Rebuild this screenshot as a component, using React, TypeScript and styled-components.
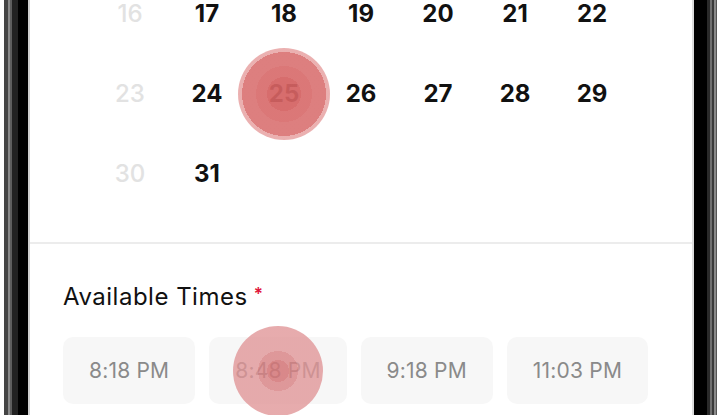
import styled, { createGlobalStyle } from "styled-components"

const GlobalStyle = createGlobalStyle`
  html, body {
    margin: 0;
    padding: 0;
    background: #ffffff;
    overflow: hidden;
  }
  body {
    font-family: Inter, "Noto Sans", "Liberation Sans", sans-serif;
    color: #111111;
  }
`

const Device = styled.div`
  display: flex;
  height: 415px;
  padding: 0 5px 0 4px;
  box-sizing: border-box;
`

const Bezel = styled.div<{ $side: "left" | "right" }>`
  width: ${p => (p.$side === "left" ? "26px" : "25px")};
  flex-shrink: 0;
  background: ${p =>
    p.$side === "left"
      ? `linear-gradient(90deg, #444 0 4px, #8a8a8a 4px 6px, #5e5e5e 6px 8px, #222 8px 14px, #000 14px 24px, #cfcfcf 24px 26px)`
      : `linear-gradient(90deg, #dcdcdc 0 2px, #000 2px 15px, #2a2a2a 15px 18px, #707070 18px 20px, #3a3a3a 20px 22px, #8a8a8a 22px 24px, #555 24px 25px)`};
`

const Screen = styled.div`
  flex: 1;
  position: relative;
  overflow: hidden;
  background: #ffffff;
`

const Calendar = styled.div`
  display: grid;
  grid-template-columns: repeat(7, 77px);
  grid-auto-rows: 80px;
  justify-content: center;
  margin-top: -26px;
`

const Day = styled.div<{ $muted?: boolean }>`
  position: relative;
  display: flex;
  align-items: center;
  justify-content: center;
  font-size: 24px;
  line-height: 1;
  font-weight: ${p => (p.$muted ? 500 : 700)};
  color: ${p => (p.$muted ? "#e2e2e2" : "#111111")};
`

const Touch = styled.div<{ $size: number; $tone: "strong" | "soft" }>`
  position: absolute;
  left: 50%;
  top: 50%;
  width: ${p => p.$size}px;
  height: ${p => p.$size}px;
  margin: ${p => -p.$size / 2}px 0 0 ${p => -p.$size / 2}px;
  border-radius: 50%;
  box-sizing: border-box;
  background: ${p =>
    p.$tone === "strong"
      ? `radial-gradient(circle, rgba(212,98,98,0.93) 0 17px, rgba(216,108,108,0.92) 17px 28px, rgba(218,116,116,0.92) 28px 42px, rgba(228,150,150,0.75) 42px)`
      : `radial-gradient(circle, rgba(212,118,120,0.86) 0 11px, rgba(216,128,130,0.8) 11px 20px, rgba(224,148,150,0.78) 20px)`};
  pointer-events: none;
`

const Divider = styled.div`
  height: 2px;
  background: #ececec;
  margin-top: 28px;
`

const TimesSection = styled.section`
  padding: 36px 33px 0;
`

const Heading = styled.h2`
  margin: 0;
  font-size: 24px;
  line-height: 28px;
  font-weight: 400;
  letter-spacing: 0.5px;
  color: #111111;
`

const Required = styled.span`
  color: #e0163c;
  font-size: 17px;
  font-weight: 600;
  margin-left: 6px;
  vertical-align: 5px;
`

const ChipRow = styled.div`
  display: flex;
  gap: 14px;
  margin-top: 26px;
`

const Chip = styled.div`
  position: relative;
  display: flex;
  align-items: center;
  justify-content: center;
  height: 67px;
  padding: 0 26px;
  border-radius: 10px;
  background: #f7f7f7;
  color: #8a8a8a;
  font-size: 21px;
  letter-spacing: 0.2px;
  white-space: nowrap;
`

const weeks: number[][] = [
  [16, 17, 18, 19, 20, 21, 22],
  [23, 24, 25, 26, 27, 28, 29],
  [30, 31],
]

const times = ["8:18 PM", "8:48 PM", "9:18 PM", "11:03 PM"]

export default function App() {
  return (
    <>
      <GlobalStyle />
      <Device>
        <Bezel $side="left" />
        <Screen>
          <Calendar>
            {weeks.flat().map((d, i) => (
              <Day key={d} $muted={i % 7 === 0}>
                {d}
                {d === 25 && <Touch $size={92} $tone="strong" />}
              </Day>
            ))}
          </Calendar>
          <Divider />
          <TimesSection>
            <Heading>
              Available Times<Required>*</Required>
            </Heading>
            <ChipRow>
              {times.map(t => (
                <Chip key={t}>
                  {t}
                  {t === "8:48 PM" && <Touch $size={90} $tone="soft" />}
                </Chip>
              ))}
            </ChipRow>
          </TimesSection>
        </Screen>
        <Bezel $side="right" />
      </Device>
    </>
  )
}
